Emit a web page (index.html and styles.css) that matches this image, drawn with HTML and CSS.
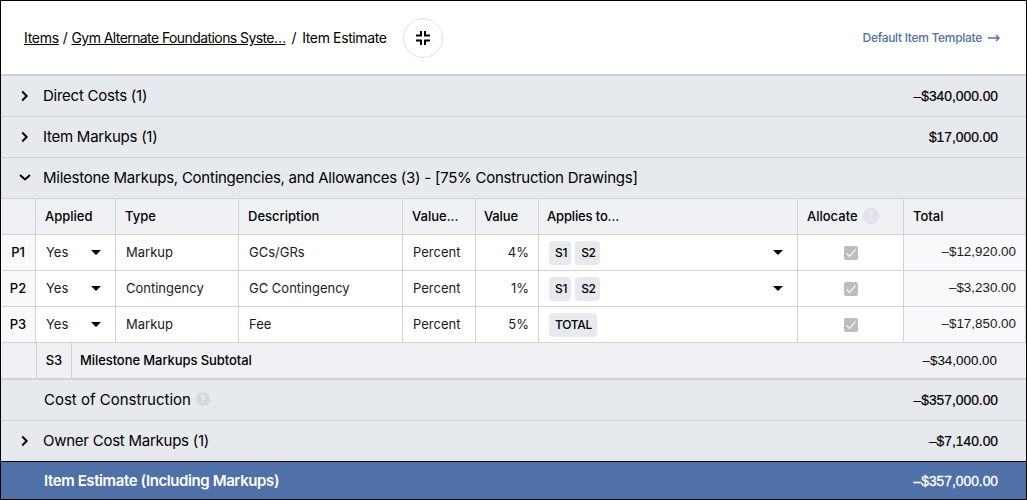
FILE: index.html
```html
<!DOCTYPE html>
<html lang="en">
<head>
<meta charset="utf-8">
<title>Item Estimate</title>
<link rel="stylesheet" href="styles.css">
</head>
<body>
<main class="frame">
  <header class="topbar">
    <nav class="crumbs">
      <a class="crumb-link">Items</a><span class="sep">/</span><a class="crumb-link long">Gym Alternate Foundations Syste…</a><span class="sep last">/</span><span class="current">Item Estimate</span>
    </nav>
    <button class="round-btn" aria-label="Collapse">
      <svg width="20" height="20" viewBox="0 0 20 20"><path d="M8 3v4.500H3M12 3v4.500h5M8 17v-4.500H3M12 17v-4.500h5" fill="none" stroke="#000" stroke-width="2"/></svg>
    </button>
    <a class="template-link">Default Item Template
      <svg width="12" height="8" viewBox="0 0 12 8"><path d="M0 4h11M8 1l3 3-3 3" fill="none" stroke="#5470a8" stroke-width="1.400"/></svg>
    </a>
  </header>

  <section class="band first">
    <svg class="chev" width="12" height="12" viewBox="0 0 12 12"><path d="M3.200 1.500 7.700 6l-4.500 4.500" fill="none" stroke="#000" stroke-width="2"/></svg>
    <span class="band-title">Direct Costs (1)</span><span class="money">–$340,000.00</span>
  </section>
  <section class="band">
    <svg class="chev" width="12" height="12" viewBox="0 0 12 12"><path d="M3.200 1.500 7.700 6l-4.500 4.500" fill="none" stroke="#000" stroke-width="2"/></svg>
    <span class="band-title">Item Markups (1)</span><span class="money">$17,000.00</span>
  </section>
  <section class="band">
    <svg class="chev" width="12" height="12" viewBox="0 0 12 12"><path d="M1 3 6 7.500 11 3" fill="none" stroke="#000" stroke-width="2"/></svg>
    <span class="band-title">Milestone Markups, Contingencies, and Allowances (3) - [75% Construction Drawings]</span>
  </section>

  <div class="grid">
    <div class="cell head"></div>
    <div class="cell head">Applied</div>
    <div class="cell head">Type</div>
    <div class="cell head">Description</div>
    <div class="cell head">Value...</div>
    <div class="cell head tight">Value</div>
    <div class="cell head tight">Applies to...</div>
    <div class="cell head">Allocate<span class="help">?</span></div>
    <div class="cell head">Total</div>

    <div class="cell key">P1</div>
    <div class="cell select">Yes<i class="caret"></i></div>
    <div class="cell">Markup</div>
    <div class="cell">GCs/GRs</div>
    <div class="cell">Percent</div>
    <div class="cell right">4%</div>
    <div class="cell select"><span class="tags"><b class="tag short">S1</b><b class="tag short">S2</b></span><i class="caret"></i></div>
    <div class="cell center"><span class="check"><svg width="14" height="14" viewBox="0 0 14 14"><path d="M2.500 7.500 5.500 10.500 11.500 3.500" fill="none" stroke="#f2f2f2" stroke-width="1.300"/></svg></span></div>
    <div class="cell total">–$12,920.00</div>

    <div class="cell key">P2</div>
    <div class="cell select">Yes<i class="caret"></i></div>
    <div class="cell">Contingency</div>
    <div class="cell">GC Contingency</div>
    <div class="cell">Percent</div>
    <div class="cell right">1%</div>
    <div class="cell select"><span class="tags"><b class="tag short">S1</b><b class="tag short">S2</b></span><i class="caret"></i></div>
    <div class="cell center"><span class="check"><svg width="14" height="14" viewBox="0 0 14 14"><path d="M2.500 7.500 5.500 10.500 11.500 3.500" fill="none" stroke="#f2f2f2" stroke-width="1.300"/></svg></span></div>
    <div class="cell total">–$3,230.00</div>

    <div class="cell key">P3</div>
    <div class="cell select">Yes<i class="caret"></i></div>
    <div class="cell">Markup</div>
    <div class="cell">Fee</div>
    <div class="cell">Percent</div>
    <div class="cell right">5%</div>
    <div class="cell select"><span class="tags"><b class="tag">TOTAL</b></span></div>
    <div class="cell center"><span class="check"><svg width="14" height="14" viewBox="0 0 14 14"><path d="M2.500 7.500 5.500 10.500 11.500 3.500" fill="none" stroke="#f2f2f2" stroke-width="1.300"/></svg></span></div>
    <div class="cell total">–$17,850.00</div>
  </div>

  <div class="subtotal">
    <span class="sub-pad"></span><span class="sub-key">S3</span><span class="sub-title">Milestone Markups Subtotal</span><span class="sub-money">–$34,000.00</span>
  </div>

  <section class="band cost">
    <span class="band-title plain">Cost of Construction<span class="help small">?</span></span><span class="money">–$357,000.00</span>
  </section>
  <section class="band owner">
    <svg class="chev" width="12" height="12" viewBox="0 0 12 12"><path d="M3.200 1.500 7.700 6l-4.500 4.500" fill="none" stroke="#000" stroke-width="2"/></svg>
    <span class="band-title">Owner Cost Markups (1)</span><span class="money">–$7,140.00</span>
  </section>
  <section class="grand">
    <span class="grand-title">Item Estimate (Including Markups)</span><span class="money strong">–$357,000.00</span>
  </section>
</main>
</body>
</html>
```
FILE: styles.css
```css
* { box-sizing: border-box; }
html, body { margin: 0; height: 100%; background: #fff; }
body { font-family: Inter, "Liberation Sans", sans-serif; color: #000; overflow: hidden; }
.frame { width: 1027px; height: 500px; border: 1px solid #000; display: flex; flex-direction: column; }
.topbar { height: 73px; display: flex; align-items: center; padding: 0 26px 0 23px; font-size: 14px; letter-spacing: -0.3px; background: #fff; flex: none; }
.crumbs { display: flex; align-items: center; }
.crumb-link { text-decoration: underline; }
.crumb-link.long { letter-spacing: -0.58px; }
.sep { margin: 0 4px; }
.sep.last { margin: 0 6px 0 6px; }
.current { letter-spacing: -0.38px; }
.round-btn { width: 40px; height: 40px; border-radius: 50%; border: 1px solid #dfe2ea; background: #fff; margin-left: 16px; padding: 0; display: flex; align-items: center; justify-content: center; }
.template-link { margin-left: auto; display: flex; align-items: center; gap: 6px; color: #5470a8; font-size: 12px; font-weight: 500; }
.band { height: 41px; flex: none; background: #e6e9ee; border-top: 1px solid #cfd3d8; display: flex; align-items: center; padding: 0 28px 0 18px; font-size: 15px; }
.band.first { border-top-width: 2px; height: 42px; }
.band.cost { border-top: 0; height: 40px; }
.chev { margin-right: 12px; flex: none; }
.band-title { flex: 1; letter-spacing: -0.25px; padding-bottom: 2px; }
.band-title.plain { margin-left: 25px; display: flex; align-items: center; letter-spacing: 0; }
.money { font-family: "Liberation Sans", Arial, sans-serif; font-size: 13.8px; margin-left: auto; -webkit-text-stroke: 0.2px #000; }
.grid { display: grid; grid-template-columns: 35px 80px 123px 164px 73px 63px 259px 106px 1fr; grid-template-rows: repeat(4, 36px); flex: none; }
.cell { border-top: 1px solid #cfd3d8; border-right: 1px solid #cfd3d8; display: flex; align-items: center; padding: 0 9px 2px 10px; font-size: 13px; background: #fff; color: #1b1b1b; min-width: 0; }
.head { background: #eff1f5; color: #000; font-weight: 500; padding-left: 9px; }
.head.tight { padding-left: 8px; letter-spacing: -0.15px; }
.key { background: #f9f9fb; justify-content: center; padding: 0 0 2px; font-weight: 500; color: #000; }
.select { justify-content: space-between; padding-right: 14px; }
.right { justify-content: flex-end; }
.center { justify-content: center; padding: 0; }
.total { justify-content: flex-end; background: #f9f9fb; padding-right: 9px; font-family: "Liberation Sans", Arial, sans-serif; font-size: 13.4px; }
.caret { width: 0; height: 0; margin-top: 2px; border-left: 5px solid transparent; border-right: 5px solid transparent; border-top: 5px solid #000; }
.tags { display: flex; gap: 4px; margin-top: 2px; }
.tag { background: #e6e9ee; border-radius: 4px; font-size: 12px; font-weight: 500; letter-spacing: -0.3px; height: 24px; padding: 0 5px 0 6px; display: flex; align-items: center; color: #000; }
.tag.short { padding-right: 4px; }
.check { width: 14px; height: 14px; border-radius: 2px; background: #bdbdbd; display: flex; }
.help { display: inline-flex; width: 16px; height: 16px; margin-left: 5px; border-radius: 50%; background: #dfe2ea; color: #e9ebf0; font-size: 12px; font-weight: 700; align-items: center; justify-content: center; }
.help.small { width: 14px; height: 14px; background: #d4d8dc; color: #eceef1; font-size: 10px; }
.subtotal { height: 38px; flex: none; display: flex; align-items: stretch; background: #eff1f5; border-top: 1px solid #cfd3d8; border-bottom: 2px solid #cfd3d8; font-size: 13px; font-weight: 500; }
.subtotal > span { display: flex; align-items: center; }
.sub-pad { width: 36px; border-right: 1px solid #cfd3d8; }
.sub-key { width: 35px; border-right: 1px solid #cfd3d8; justify-content: center; padding-bottom: 2px; }
.sub-title { padding: 0 0 2px 8px; flex: 1; letter-spacing: -0.08px; }
.sub-money { font-family: "Liberation Sans", Arial, sans-serif; font-weight: 400; font-size: 13.4px; padding-right: 29px; }
.grand { flex: 1; background: #5070a8; color: #fff; border-top: 1px solid #000; display: flex; align-items: center; padding: 0 28px 0 43px; font-size: 15px; font-weight: 600; letter-spacing: -0.4px; }
.grand .money { letter-spacing: 0; font-weight: 400; padding-top: 1px; }
.money.strong { -webkit-text-stroke: 0.3px #fff; }
```
